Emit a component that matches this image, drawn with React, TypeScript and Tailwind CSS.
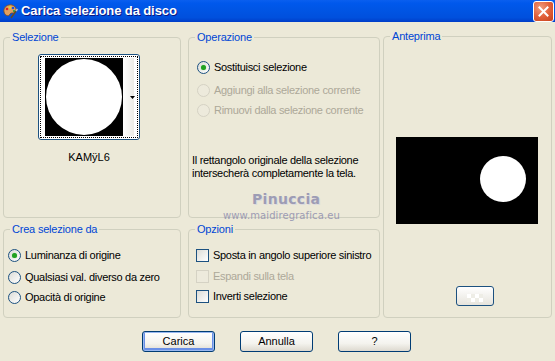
import React from "react";

const font = "font-['Liberation_Sans',Arial,sans-serif]";

function Group({ label, className, children }: { label: string; className?: string; children?: React.ReactNode }) {
  return (
    <div className={"relative border border-[#D0D0BF] rounded-[4px] " + (className ?? "")}>
      <span className="absolute left-[6px] top-[-8px] bg-[#ECE9D8] px-[2px] text-[#0046D5] text-[11px] leading-[14px] tracking-[-0.2px]">
        {label}
      </span>
      {children}
    </div>
  );
}

function Radio({ checked, disabled, label }: { checked?: boolean; disabled?: boolean; label: string }) {
  return (
    <div className="flex items-center h-[13px]">
      <span
        className={
          "w-[13px] h-[13px] rounded-full border flex items-center justify-center shrink-0 " +
          (disabled
            ? "border-[#D5D2C4] bg-[#EDEADC]"
            : "border-[#1C5180] bg-[linear-gradient(135deg,#DCDCD7,#FFFFFF)]")
        }
      >
        {checked && <span className="w-[5px] h-[5px] rounded-full bg-[#21A121] shadow-[0_0_1px_#6FD36F]" />}
      </span>
      <span className={"ml-[4px] text-[11px] leading-[13px] tracking-[-0.3px] whitespace-nowrap " + (disabled ? "text-[#ACA899]" : "text-black")}>
        {label}
      </span>
    </div>
  );
}

function Check({ disabled, label }: { disabled?: boolean; label: string }) {
  return (
    <div className="flex items-center h-[13px]">
      <span
        className={
          "w-[13px] h-[13px] border shrink-0 " +
          (disabled ? "border-[#D5D2C4] bg-[#EDEADC]" : "border-[#1C5180] bg-[linear-gradient(135deg,#DCDCD7,#FFFFFF)]")
        }
      />
      <span className={"ml-[4px] text-[11px] leading-[13px] tracking-[-0.3px] whitespace-nowrap " + (disabled ? "text-[#ACA899]" : "text-black")}>
        {label}
      </span>
    </div>
  );
}

function Btn({ label, def }: { label: string; def?: boolean }) {
  return (
    <div
      className={
        "w-[73px] h-[21px] rounded-[3px] border border-[#003C74] flex items-center justify-center text-[11px] text-black bg-[linear-gradient(180deg,#FFFFFF_0%,#F4F3EE_60%,#DDD9CF_100%)] " +
        (def ? "shadow-[inset_0_0_0_1px_#99B8F0,inset_0_-1px_0_2px_#6A8FE6]" : "")
      }
    >
      {label}
    </div>
  );
}

export default function App() {
  return (
    <div className={"w-[555px] h-[361px] bg-[#ECE9D8] flex flex-col overflow-hidden " + font}>
      {/* title bar */}
      <div className="h-[22px] shrink-0 flex items-center bg-[linear-gradient(180deg,#0A5FEF_0%,#0058EC_15%,#0054E3_50%,#0050DD_80%,#003DC8_100%)]">
        <svg width="16" height="16" viewBox="0 0 16 16" className="ml-[2px]">
          <path d="M2 9 C1 4 6 1 10 2 C14 3 15 7 13 9 C11 11 9 9 8 11 C7 14 3 13 2 9 Z" fill="#E0A060" stroke="#7A4A20" strokeWidth="0.8" />
          <circle cx="5" cy="6" r="1.3" fill="#E02020" />
          <circle cx="8" cy="4.5" r="1.3" fill="#F0D020" />
          <circle cx="11" cy="5" r="1.3" fill="#2050E0" />
          <circle cx="12" cy="8" r="1.1" fill="#20A040" />
          <path d="M9 15 L14 8" stroke="#6A4A20" strokeWidth="1.5" />
          <path d="M14 8 L15.5 6" stroke="#C0C0C0" strokeWidth="1.5" />
        </svg>
        <span className="ml-[3px] text-white font-bold text-[13px] [text-shadow:1px_1px_0_#0A1883] tracking-[-0.1px]">
          Carica selezione da disco
        </span>
        <div className="ml-auto mr-[1px] w-[21px] h-[21px] rounded-[3px] border border-white bg-[radial-gradient(circle_at_35%_30%,#F19C7E_0%,#E2613B_50%,#C5401B_100%)] flex items-center justify-center">
          <svg width="11" height="11" viewBox="0 0 11 11">
            <path d="M1.5 1.5 L9.5 9.5 M9.5 1.5 L1.5 9.5" stroke="white" strokeWidth="2" strokeLinecap="square" />
          </svg>
        </div>
      </div>

      {/* body */}
      <div className="flex pl-[3px] pt-[15px]">
        <div className="flex flex-col">
          <div className="flex">
            <Group label="Selezione" className="w-[178px] h-[181px]">
              <div className="ml-[34px] mt-[16px] w-[102px] h-[86px] rounded-[3px] border border-[#1C5180] bg-white p-[1px]">
                <div className="w-full h-full border border-dotted border-black flex pl-[4px] pt-[1px]">
                  <div className="w-[78px] h-[78px] bg-black flex items-center justify-center">
                    <div className="w-[76px] h-[76px] rounded-full bg-white" />
                  </div>
                  <div className="w-[11px] h-[78px] bg-[linear-gradient(90deg,#FFFFFF,#ECEBE6)] flex items-center justify-end">
                    <svg width="5" height="3" viewBox="0 0 5 3" className="mr-[-1px]">
                      <path d="M0 0 L5 0 L2.5 3 Z" fill="black" />
                    </svg>
                  </div>
                </div>
              </div>
              <div className="mt-[9px] text-center text-[11px] text-black pr-[6px]">KAMÿL6</div>
            </Group>
            <Group label="Operazione" className="ml-[7px] w-[192px] h-[181px]">
              <div className="pl-[8px] pt-[23px] flex flex-col">
                <Radio checked label="Sostituisci selezione" />
                <div className="mt-[10px]">
                  <Radio disabled label="Aggiungi alla selezione corrente" />
                </div>
                <div className="mt-[7px]">
                  <Radio disabled label="Rimuovi dalla selezione corrente" />
                </div>
              </div>
              <div className="pl-[3px] mt-[37px] text-[11px] leading-[13px] tracking-[-0.3px] whitespace-nowrap text-black">
                Il rettangolo originale della selezione
                <br />
                intersecherà completamente la tela.
              </div>
              <div className="flex flex-col items-start mt-[12px] text-[#8A8AAC] opacity-80">
                <span className="ml-[63px] font-['DejaVu_Sans',sans-serif] font-bold text-[14px] leading-[15px] tracking-[0.3px] [text-shadow:1px_1px_0_#D8D8E0]">
                  Pinuccia
                </span>
                <span className="ml-[34px] mt-[3px] font-['DejaVu_Sans',sans-serif] text-[10px] leading-[11px] tracking-[0.1px]">
                  www.maidiregrafica.eu
                </span>
              </div>
            </Group>
          </div>
          <div className="flex mt-[11px]">
            <Group label="Crea selezione da" className="w-[178px] h-[89px]">
              <div className="pl-[4px] pt-[19px] flex flex-col">
                <Radio checked label="Luminanza di origine" />
                <div className="mt-[9px]">
                  <Radio label="Qualsiasi val. diverso da zero" />
                </div>
                <div className="mt-[7px]">
                  <Radio label="Opacità di origine" />
                </div>
              </div>
            </Group>
            <Group label="Opzioni" className="ml-[7px] w-[192px] h-[89px]">
              <div className="pl-[7px] pt-[19px] flex flex-col">
                <Check label="Sposta in angolo superiore sinistro" />
                <div className="mt-[8px]">
                  <Check disabled label="Espandi sulla tela" />
                </div>
                <div className="mt-[7px]">
                  <Check label="Inverti selezione" />
                </div>
              </div>
            </Group>
          </div>
        </div>
        <Group label="Anteprima" className="ml-[3px] mt-[-1px] w-[169px] h-[282px]">
          <div className="ml-[12px] mt-[100px] w-[142px] h-[87px] bg-black relative">
            <div className="absolute left-[84px] top-[19px] w-[46px] h-[46px] rounded-full bg-white" />
          </div>
          <div className="ml-[72px] mt-[62px] w-[38px] h-[20px] rounded-[3px] border border-[#1C5180] bg-[linear-gradient(180deg,#FFFFFF,#E6E4DC)] flex items-center justify-center">
            <div className="grid grid-cols-4 w-[16px] h-[8px] mt-[4px]">
              <div className="bg-white" /><div className="bg-[#EEEDE6]" /><div className="bg-white" /><div className="bg-[#EEEDE6]" />
              <div className="bg-[#EEEDE6]" /><div className="bg-white" /><div className="bg-[#EEEDE6]" /><div className="bg-white" />
            </div>
          </div>
        </Group>
      </div>

      {/* buttons */}
      <div className="flex pl-[142px] mt-[13px] gap-[25px]">
        <Btn label="Carica" def />
        <Btn label="Annulla" />
        <Btn label="?" />
      </div>
    </div>
  );
}
